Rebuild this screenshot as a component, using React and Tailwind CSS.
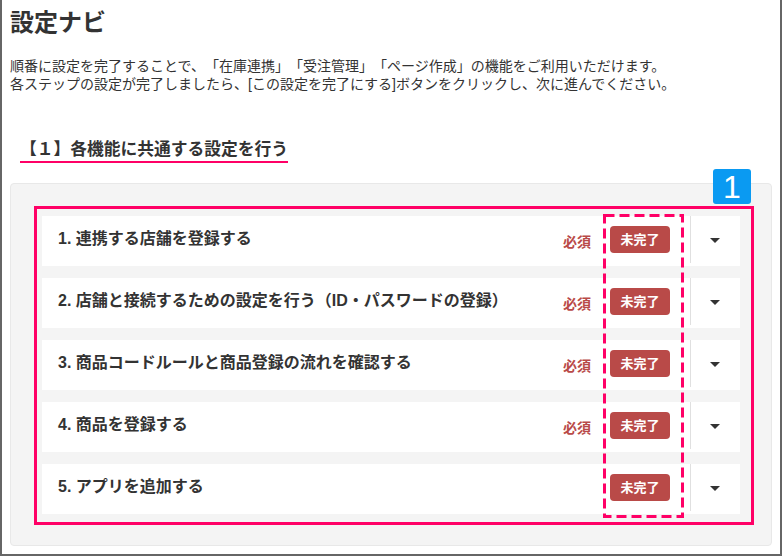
import React from "react";

const steps = [
  { label: "1. 連携する店舗を登録する", required: true },
  { label: "2. 店舗と接続するための設定を行う（ID・パスワードの登録）", required: true },
  { label: "3. 商品コードルールと商品登録の流れを確認する", required: true },
  { label: "4. 商品を登録する", required: true },
  { label: "5. アプリを追加する", required: false },
];

const font = { fontFamily: '"Liberation Sans", "Noto Sans CJK JP", sans-serif' };

export default function App() {
  return (
    <div
      className="relative w-[782px] h-[556px] overflow-hidden bg-white border-l-2 border-r-2 border-b-2 border-[#666] px-[8px] text-[#333] [text-spacing-trim:space-all]"
      style={font}
    >
      <h1 className="mt-[11px] text-[24px] leading-none font-bold">設定ナビ</h1>
      <p className="mt-[22px] text-[14px] leading-[18px]">
        順番に設定を完了することで、「在庫連携」「受注管理」「ページ作成」の機能をご利用いただけます。
        <br />
        各ステップの設定が完了しましたら、[この設定を完了にする]ボタンをクリックし、次に進んでください。
      </p>
      <div className="mt-[45px] ml-[10px]">
        <h2 className="inline-block text-[16.75px] leading-[20px] font-bold pb-[1px] border-b-2 border-[#ff0066]">
          【１】各機能に共通する設定を行う
        </h2>
      </div>
      <div className="mt-[20px] bg-[#f4f4f4] border border-[#e8e8e8] rounded-[4px] px-[31px] pt-[32px] pb-[31px]">
        <div className="flex flex-col gap-[12px]">
          {steps.map((s) => (
            <div key={s.label} className="h-[50px] bg-white flex items-center">
              <div className="flex-1 pl-[16px] pb-[5px] text-[16px] font-bold leading-none whitespace-nowrap">
                {s.label}
              </div>
              <div className="mr-[19px] text-[14px] font-bold text-[#b94a48] leading-none pt-[2px]">
                {s.required ? "必須" : ""}
              </div>
              <div className="w-[60px] h-[27px] rounded-[4px] bg-[#b94a48] text-white text-[13px] font-bold flex items-center justify-center leading-none mb-[3px]">
                未完了
              </div>
              <div className="ml-[20px] w-px h-[47px] self-start bg-[#e0e0e0]" />
              <div className="w-[49px] flex items-center justify-center pb-[2px] pr-[1px]">
                <div className="w-0 h-0 border-l-[5px] border-r-[5px] border-t-[5px] border-l-transparent border-r-transparent border-t-[#333]" />
              </div>
            </div>
          ))}
        </div>
      </div>

      {/* annotation overlays */}
      <div className="absolute left-[711px] top-[169px] w-[38px] h-[35px] rounded-[3px] bg-[#0a9af2] text-white flex items-center justify-center text-[32px] leading-none">
        1
      </div>
      <div className="absolute left-[32px] top-[206px] w-[720px] h-[319px] border-[3px] border-[#ff0066]" />
      <svg className="absolute left-[601px] top-[214px]" width="81" height="304" viewBox="0 0 81 304">
        <rect x="1.5" y="1.5" width="78" height="301" fill="none" stroke="#ff0066" strokeWidth="3" strokeDasharray="10 5" />
      </svg>
    </div>
  );
}
